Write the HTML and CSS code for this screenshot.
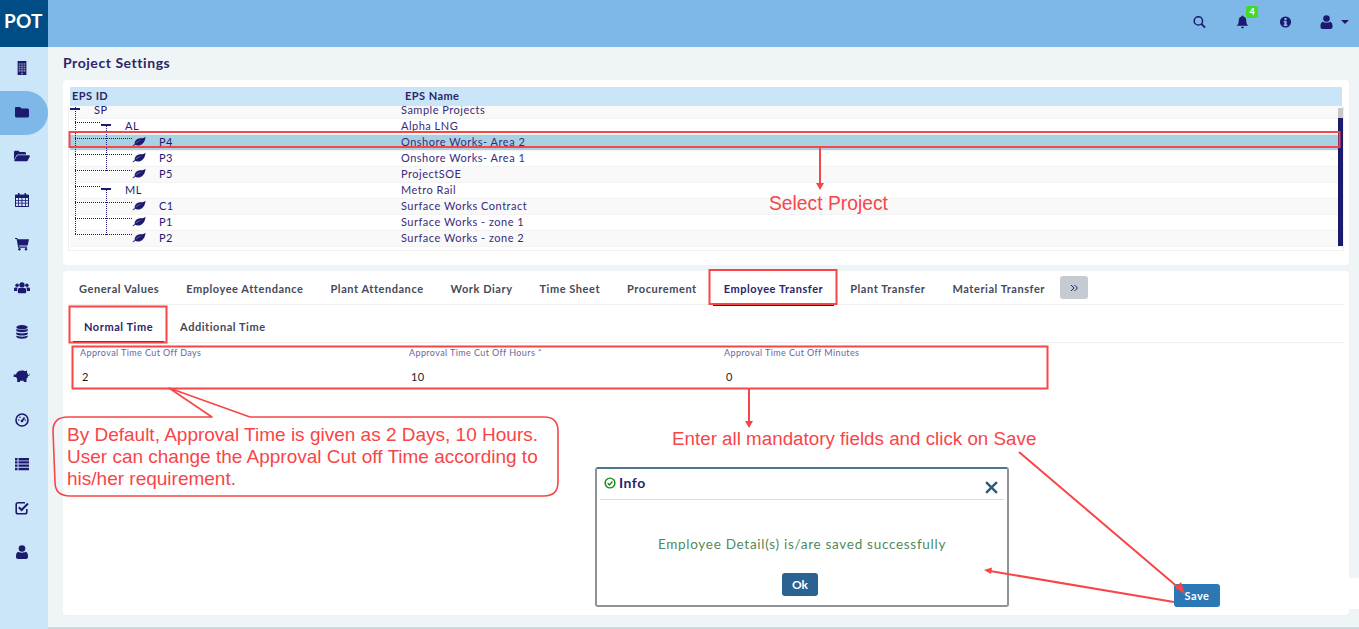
FILE: index.html
```html
<!DOCTYPE html>
<html lang="en">
<head>
<meta charset="utf-8">
<title>Project Settings</title>
<link rel="stylesheet" href="styles.css">
</head>
<body>
<svg class="defs" width="0" height="0" aria-hidden="true">
  <symbol id="leaf" viewBox="0 0 16 12"><path d="M15.5 .5C15 5 13 10 7.5 10.500C6 10.700 4.500 10.300 3.700 9.700L1.500 11.500L.5 11L3 8.800C3 4 7 2.500 10 2.300C12 2.200 14 2 15.500 .5ZM4 8.500C6 6.500 8 5.500 11 4.700C8 5 5.500 6 4 8.500Z" fill-rule="evenodd"/></symbol>
</svg>
<div class="shell">
  <aside class="sidebar">
    <div class="logo">POT</div>
    <nav class="nav">
      <a class="nav-item"><svg class="ic" viewBox="0 0 14 16"><path d="M2 0H12V16H2Z"/><path class="win" d="M3.200 2.600H5.200V4.400H3.200ZM6 2.600H8V4.400H6ZM8.800 2.600H10.800V4.400H8.800ZM3.200 5.200H5.200V7H3.200ZM6 5.200H8V7H6ZM8.800 5.200H10.800V7H8.800ZM3.200 7.800H5.200V9.600H3.200ZM6 7.800H8V9.600H6ZM8.800 7.800H10.800V9.600H8.800ZM3.200 10.400H5.200V12.200H3.200ZM6 10.400H8V12.200H6ZM8.800 10.400H10.800V12.200H8.800ZM5.800 13.400H8.200V15H5.800Z"/></svg></a>
      <a class="nav-item active"><svg class="ic" viewBox="0 0 14 14"><path d="M1.200 2H5L6.500 3.500H12.500C13.300 3.500 14 4.200 14 5V11C14 11.800 13.300 12.500 12.500 12.500H1.500C.7 12.500 0 11.800 0 11V3.200C0 2.500 .5 2 1.200 2Z"/></svg></a>
      <a class="nav-item"><svg class="ic wide" viewBox="0 0 18 14"><path d="M0 11.500V2.500C0 1.700 .6 1 1.500 1H5L6.500 2.500H12C12.800 2.500 13.500 3.200 13.500 4V5.200H4.500C3.800 5.200 3.200 5.600 2.900 6.200ZM4.500 6.200H17C17.700 6.200 18.100 6.900 17.800 7.500L15.300 12.300C15 12.800 14.500 13 14 13H1.200C.6 13 .2 12.400 .5 11.800L3.200 7C3.500 6.500 4 6.200 4.500 6.200Z"/></svg></a>
      <a class="nav-item"><svg class="ic" viewBox="0 0 14 14"><path fill-rule="evenodd" d="M3 0H4.500V1.500H9.500V0H11V1.500H13C13.600 1.500 14 1.900 14 2.500V13C14 13.600 13.600 14 13 14H1C.4 14 0 13.600 0 13V2.500C0 1.900 .4 1.500 1 1.500H3ZM1 5V7H3.200V5ZM4 5V7H6.500V5ZM7.400 5V7H10V5ZM10.800 5V7H13V5ZM1 7.800V9.800H3.200V7.800ZM4 7.800V9.800H6.500V7.800ZM7.400 7.800V9.800H10V7.800ZM10.800 7.800V9.800H13V7.800ZM1 10.600V13H3.200V10.600ZM4 10.600V13H6.500V10.600ZM7.400 10.600V13H10V10.600ZM10.800 10.600V13H13V10.600Z"/></svg></a>
      <a class="nav-item"><svg class="ic" viewBox="0 0 15 14"><path d="M0 .5H2.500L3 2H15L13.500 8.500H4.400L4.700 9.800H13V11H3.500L1.700 1.700H0Z"/><circle cx="4.800" cy="12.700" r="1.300"/><circle cx="11.800" cy="12.700" r="1.300"/></svg></a>
      <a class="nav-item"><svg class="ic wide" viewBox="0 0 18 14"><circle cx="3.500" cy="3.800" r="2"/><circle cx="14.500" cy="3.800" r="2"/><circle cx="9" cy="3.500" r="3"/><path d="M0 10V8C0 7 .8 6.500 2 6.500H4.200C3.600 7.500 3.500 8.500 3.500 10.500H1C.4 10.500 0 10.500 0 10ZM18 10V8C18 7 17.200 6.500 16 6.500H13.800C14.400 7.500 14.500 8.500 14.500 10.500H17C17.600 10.500 18 10.500 18 10ZM6 7H12C13 7 13.700 8 13.700 9.500V11.500C13.700 12.500 13 13 12 13H6C5 13 4.300 12.500 4.300 11.500V9.500C4.300 8 5 7 6 7Z"/></svg></a>
      <a class="nav-item"><svg class="ic" viewBox="0 0 12 14"><ellipse cx="6" cy="2.300" rx="5.700" ry="2.200"/><path d="M.3 3.800C1.500 5.300 10.500 5.300 11.700 3.800V5.800C11 7.700 1 7.700 .3 5.800ZM.3 7.300C1.500 8.800 10.500 8.800 11.700 7.300V9C11 11 1 11 .3 9ZM.3 10.500C1.500 12 10.500 12 11.700 10.500V11.800C11 14.300 1 14.300 .3 11.800Z"/></svg></a>
      <a class="nav-item"><svg class="ic pig" viewBox="0 0 17 14"><path d="M3 5.500C3.500 3 6 1.500 9 1.500C10.500 1.500 11.500 1.700 12.500 2.300L14 1.300V3.800C14.500 4.300 15 5 15 6C16 6 16.500 5.500 16.500 4.500L17 4.800C17 6 16.200 7 15 7C14.800 8.300 14 9.300 13.500 9.700V13H10.700V11.800H7V13H4.200V10C3.700 9.300 3.300 8.800 3.100 8H.7V5.500Z"/></svg></a>
      <a class="nav-item"><svg class="ic" viewBox="0 0 14 14"><circle class="o" cx="7" cy="7" r="6"/><path class="o" d="M7 8L9.500 4.500"/><circle cx="7" cy="8" r="1.300"/><circle cx="3.800" cy="7" r=".8"/><circle cx="5" cy="4.300" r=".8"/><circle cx="10.200" cy="7" r=".8"/></svg></a>
      <a class="nav-item"><svg class="ic" viewBox="0 0 14 13"><path d="M0 .5H2.500V3H0ZM3.500 .5H14V3H3.500ZM0 3.800H2.500V6H0ZM3.500 3.800H14V6H3.500ZM0 7H2.500V9.200H0ZM3.500 7H14V9.200H3.500ZM0 10.200H2.500V12.700H0ZM3.500 10.200H14V12.700H3.500Z"/></svg></a>
      <a class="nav-item"><svg class="ic" viewBox="0 0 14 14"><path class="o" d="M11.800 8V11C11.800 12 11.200 12.800 10 12.800H3C1.800 12.800 1.200 12 1.200 11V3.500C1.200 2.500 1.800 1.800 3 1.800H10" /><path class="o thick" d="M3.800 6.300L6.600 9L13 2.500"/></svg></a>
      <a class="nav-item"><svg class="ic" viewBox="0 0 12 14"><circle cx="6" cy="3.500" r="3.300"/><path d="M2.500 6.800C4 8 8 8 9.500 6.800C11 7 12 8.500 12 11V12C12 13.200 11.200 14 10 14H2C.8 14 0 13.200 0 12V11C0 8.500 1 7 2.500 6.800Z"/></svg></a>
    </nav>
  </aside>
  <div class="main">
    <header class="topbar">
      <svg class="ic top-ic" viewBox="0 0 14 14"><circle class="o" cx="5.800" cy="5.800" r="4.500"/><path class="o thick" d="M9 9L13 13"/></svg>
      <span class="bell"><svg class="ic top-ic" viewBox="0 0 14 14"><path d="M7 0C7.600 0 8 .4 8 1C10 1.500 11 3 11 5C11 8.500 12 10 13.500 11H.5C2 10 3 8.500 3 5C3 3 4 1.500 6 1C6 .4 6.400 0 7 0ZM5.500 12H8.500C8.500 13 7.800 13.800 7 13.800C6.200 13.800 5.500 13 5.500 12Z"/></svg><span class="badge">4</span></span>
      <svg class="ic top-ic" viewBox="0 0 14 14"><path fill-rule="evenodd" d="M7 1A6 6 0 1 1 7 13A6 6 0 1 1 7 1ZM5.800 2.800V5H8.200V2.800ZM5 6V7.300H5.800V9.800H5V11.200H9V9.800H8.200V6Z"/></svg>
      <span class="user"><svg class="ic top-ic" viewBox="0 0 12 14"><circle cx="6" cy="3.500" r="3.300"/><path d="M2.500 6.800C4 8 8 8 9.500 6.800C11 7 12 8.500 12 11V12C12 13.200 11.200 14 10 14H2C.8 14 0 13.200 0 12V11C0 8.500 1 7 2.500 6.800Z"/></svg><span class="caret"></span></span>
    </header>
    <main class="content">
      <h1 class="page-title">Project Settings</h1>
      <section class="panel tree-panel">
        <div class="tree-head"><div class="col-id">EPS ID</div><div class="col-name">EPS Name</div></div>
        <div class="tree-view">
          <div class="tree-rows">
            <div class="row"><div class="col-id id0"><span class="minus"></span><span>SP</span></div><div class="col-name">Sample Projects</div></div>
            <div class="row"><div class="col-id id1"><span class="minus"></span><span>AL</span></div><div class="col-name">Alpha LNG</div></div>
            <div class="row selected"><div class="col-id id2"><svg class="leaf"><use href="#leaf"/></svg><span>P4</span></div><div class="col-name">Onshore Works- Area 2</div></div>
            <div class="row"><div class="col-id id2"><svg class="leaf"><use href="#leaf"/></svg><span>P3</span></div><div class="col-name">Onshore Works- Area 1</div></div>
            <div class="row"><div class="col-id id2"><svg class="leaf"><use href="#leaf"/></svg><span>P5</span></div><div class="col-name">ProjectSOE</div></div>
            <div class="row"><div class="col-id id1"><span class="minus"></span><span>ML</span></div><div class="col-name">Metro Rail</div></div>
            <div class="row"><div class="col-id id2"><svg class="leaf"><use href="#leaf"/></svg><span>C1</span></div><div class="col-name">Surface Works Contract</div></div>
            <div class="row"><div class="col-id id2"><svg class="leaf"><use href="#leaf"/></svg><span>P1</span></div><div class="col-name">Surface Works - zone 1</div></div>
            <div class="row"><div class="col-id id2"><svg class="leaf"><use href="#leaf"/></svg><span>P2</span></div><div class="col-name">Surface Works - zone 2</div></div>
          </div>
          <svg class="tree-lines" width="120" height="140" viewBox="0 0 120 140">
            <path d="M5.500 4V132M5 19.500H31M5 35.500H63M5 51.500H63M5 67.500H63M5 83.500H31M5 99.500H63M5 115.500H63M5 131.500H63"/>
            <path d="M36.500 21V68M36.500 85V132"/>
          </svg>
          <div class="scrollbar"><div class="scroll-thumb"></div></div>
        </div>
      </section>
      <section class="panel settings-panel">
        <div class="tabs">
          <a class="tab">General Values</a>
          <a class="tab">Employee Attendance</a>
          <a class="tab">Plant Attendance</a>
          <a class="tab">Work Diary</a>
          <a class="tab">Time Sheet</a>
          <a class="tab">Procurement</a>
          <a class="tab on">Employee Transfer</a>
          <a class="tab">Plant Transfer</a>
          <a class="tab">Material Transfer</a>
          <button class="more" aria-label="More tabs"><svg class="dbl" viewBox="0 0 8 8"><path d="M1 1L4 4L1 7M4.500 1L7.500 4L4.500 7"/></svg></button>
        </div>
        <div class="subtabs">
          <a class="subtab on">Normal Time</a>
          <a class="subtab">Additional Time</a>
        </div>
        <div class="fields">
          <div class="field f1"><label>Approval Time Cut Off Days</label><div class="value">2</div></div>
          <div class="field f2"><label>Approval Time Cut Off Hours <sup>*</sup></label><div class="value">10</div></div>
          <div class="field f3"><label>Approval Time Cut Off Minutes</label><div class="value">0</div></div>
        </div>
        <div class="save-bar"><button class="save">Save</button></div>
      </section>
    </main>
  </div>
</div>

<div class="modal">
  <div class="modal-head">
    <svg class="check" viewBox="0 0 14 14"><circle cx="7" cy="7" r="5.700"/><path d="M4.300 7.200L6.300 9.200L9.900 5.300"/></svg>
    <span class="modal-title">Info</span>
    <svg class="close" viewBox="0 0 12 12"><path d="M1 1L11 11M11 1L1 11"/></svg>
  </div>
  <p class="modal-msg">Employee Detail(s) is/are saved successfully</p>
  <div class="modal-foot"><button class="ok">Ok</button></div>
</div>

<svg class="marks" width="1359" height="629" viewBox="0 0 1359 629" aria-hidden="true">
  <rect x="69.500" y="132" width="1270" height="15"/>
  <rect x="709.500" y="270" width="127" height="34"/>
  <rect x="69.500" y="306.500" width="97" height="36"/>
  <rect x="72.500" y="346.500" width="975" height="42"/>
  <path d="M820 148V186M749 389V424M1019 452L1180 589M1174 602L990 571"/>
  <path class="tip" d="M820 190L816 183H824ZM749 428L745 421H753ZM1185 594L1175 588L1181 582ZM984 570L992 567.500L991 574Z"/>
  <path class="callout" d="M212 417L169 388L250 417H544Q558 417 558 431V482Q558 496 544 496H70Q55 496 55 482L53 431Q53 417 68 417Z"/>
</svg>
<div class="note n-select">Select Project</div>
<div class="note n-default">By Default, Approval Time is given as 2 Days, 10 Hours.<br>User can change the Approval Cut off Time according to<br>his/her requirement.</div>
<div class="note n-enter">Enter all mandatory fields and click on Save</div>
</body>
</html>
```

FILE: styles.css
```css
* { box-sizing: border-box; }
html, body { margin: 0; height: 100%; overflow: hidden; }
body { font-family: Lato, "Liberation Sans", sans-serif; color: #1c1a6e; background: #eff4f7; position: relative; }
.defs { position: absolute; }

.shell { display: flex; height: 629px; }
.sidebar { width: 48px; flex: none; background: #cbe5f9; }
.logo { height: 47px; background: #004c85; color: #fff; font-weight: 700; font-size: 19px; line-height: 41px; padding-left: 4px; letter-spacing: .2px; }
.nav { display: flex; flex-direction: column; }
.nav-item { height: 44px; display: flex; align-items: center; justify-content: center; padding: 0 5px 2px 0; }
.nav-item.active { background: #7db8e8; border-radius: 0 22px 22px 0; }

.ic { width: 14px; height: 14px; fill: #1c1a6e; flex: none; }
.ic.wide { width: 16px; }
.ic.pig { width: 17px; }
.ic .o { fill: none; stroke: #1c1a6e; stroke-width: 1.600; }
.ic .o.thick { stroke-width: 2; }
.ic .win { fill: #7f80ad; }

.main { flex: 1; min-width: 0; display: flex; flex-direction: column; }
.topbar { height: 47px; flex: none; background: #7db8e8; display: flex; align-items: center; justify-content: flex-end; gap: 30px; padding: 0 10px 4px 0; }
.top-ic { width: 13px; height: 14px; }
.bell { position: relative; display: flex; }
.badge { position: absolute; left: 10px; top: -9px; width: 12px; height: 12px; border-radius: 2px; background: #3fdc23; color: #fff; font-size: 9px; font-weight: 700; line-height: 12px; text-align: center; }
.user { display: flex; align-items: center; gap: 8px; margin-left: -2px; }
.caret { width: 0; height: 0; border-left: 4px solid transparent; border-right: 4px solid transparent; border-top: 4px solid #1c1a6e; }

.content { flex: 1; padding: 7px 10px 0 15px; display: flex; flex-direction: column; border-bottom: 2px solid #d0d8df; }
.page-title { margin: 0 0 9px; font-size: 14px; line-height: 17px; font-weight: 700; letter-spacing: .55px; color: #2b2568; }
.panel { background: #fff; border-radius: 4px; }
.tree-panel { height: 185px; padding: 7px 5px 0 5px; margin-bottom: 6px; }
.tree-head { display: flex; height: 19px; margin: 0 2px 0 2px; background: #cbe5f8; font-size: 11px; line-height: 18px; font-weight: 700; color: #2b2568; letter-spacing: .45px; }
.tree-head .col-id { width: 335px; padding-left: 2px; }
.tree-view { position: relative; height: 145px; border: 1px solid #f0f0f0; border-top: 0; overflow: hidden; }
.tree-rows { margin-top: -3px; padding-left: 1px; }
.row { display: flex; height: 16px; padding-bottom: 2px; font-size: 11px; line-height: 13px; letter-spacing: .5px; color: #1e1a70; border-bottom: 1px solid #f3f3f3; }
.row:nth-child(odd) { background: #f9f9f9; }
.row.selected { background: #a6d2e4; }
.row .col-id { width: 331px; display: flex; align-items: center; }
.row .col-name { flex: 1; color: #3a2a7a; }
.id0 { padding-left: 0; }
.id0 span:last-child { margin-left: 14px; }
.id1 { padding-left: 31px; }
.id1 span:last-child { margin-left: 14px; }
.id2 { padding-left: 62px; }
.id2 span:last-child { margin-left: 13px; }
.minus { width: 10px; height: 2px; background: #1c1a6e; flex: none; position: relative; top: -1px; }
.leaf { width: 14px; height: 11px; fill: #1c1a6e; flex: none; }
.tree-lines { position: absolute; left: 1px; top: -3px; fill: none; stroke: #1c1a6e; stroke-width: 1; stroke-dasharray: 1 1; shape-rendering: crispEdges; pointer-events: none; }
.scrollbar { position: absolute; right: 0; top: 2px; bottom: 4px; width: 5px; background: #c8c8c8; }
.scroll-thumb { position: absolute; top: 10px; bottom: 0; left: 0; right: 0; background: #1c1a6e; }

.settings-panel { height: 344px; padding: 0 5px; display: flex; flex-direction: column; position: relative; }
.tabs { height: 34px; display: flex; align-items: center; padding: 2px 0 0 11px; gap: 27px; border-bottom: 1px solid #efefef; flex: none; }
.tab { font-size: 11px; font-weight: 700; letter-spacing: .55px; color: #454a5a; line-height: 32px; position: relative; white-space: nowrap; }
.tab.on { color: #2b2568; }
.tab.on::after { content: ""; position: absolute; left: -11px; right: -11px; bottom: -1px; height: 1px; background: #1c1a6e; }
.more { width: 28px; height: 23px; border: 0; background: #c6cbd3; border-radius: 3px; display: flex; align-items: center; justify-content: center; padding: 0; margin: -2px 0 0 -12px; }
.dbl { width: 8px; height: 8px; fill: none; stroke: #1c1a6e; stroke-width: 1; }
.subtabs { height: 38px; display: flex; align-items: stretch; padding-left: 5px; border-bottom: 1px solid #efefef; flex: none; }
.subtab { font-size: 11px; font-weight: 700; letter-spacing: .55px; color: #454a5a; padding: 15px 11px 0; line-height: 14px; position: relative; }
.subtab.on { color: #2b2568; margin-right: 5px; }
.subtab.on::after { content: ""; position: absolute; left: 0; right: 0; bottom: 0; height: 1px; background: #1c1a6e; }
.fields { display: flex; padding-top: 4px; height: 45px; flex: none; }
.field label { display: block; font-size: 9px; line-height: 11px; letter-spacing: .4px; color: #6a669c; }
.field sup { font-size: 8px; line-height: 0; vertical-align: 1px; }
.value { font-size: 11px; line-height: 14px; margin: 12px 0 0 2px; color: #222; letter-spacing: .3px; }
.f1 { width: 341px; padding-left: 12px; }
.f2 { width: 315px; }
.save-bar { position: absolute; left: 1111px; right: -10px; top: 307px; height: 31px; background: #fff; }
.save { position: absolute; top: 6px; left: 0; width: 46px; height: 23px; border: 0; border-radius: 3px; background: #2b78b4; color: #fff; font: 700 11px/23px Lato, sans-serif; letter-spacing: .5px; padding: 0; }

.modal { position: absolute; left: 595px; top: 467px; width: 414px; height: 140px; background: #fff; border: 2px solid #8f9396; border-top-color: #4f7590; border-radius: 3px; padding: 0 3px; }
.modal-head { height: 31px; border-bottom: 1px solid #dcdcdc; display: flex; align-items: flex-start; padding: 6px 0 0 4px; }
.check { width: 12px; height: 12px; margin-top: 2px; fill: none; stroke: #178a1a; stroke-width: 1.700; flex: none; }
.modal-title { font-size: 14px; line-height: 15px; font-weight: 700; letter-spacing: .5px; margin-left: 3px; color: #2b2568; }
.close { width: 13px; height: 13px; margin: 6px 6px 0 auto; fill: none; stroke: #2d5a7a; stroke-width: 2.200; }
.modal-msg { margin: 35px 0 0; text-align: center; font-size: 13.5px; line-height: 18px; letter-spacing: .71px; color: #4f8a5a; }
.modal-foot { text-align: center; margin-top: 20px; }
.ok { width: 36px; height: 23px; border: 0; border-radius: 3px; background: #2a6392; color: #fff; font: 700 12px/23px Lato, sans-serif; padding: 0; margin-right: 4px; }

.marks { position: absolute; left: 0; top: 0; fill: none; stroke: #f84548; stroke-width: 2; pointer-events: none; }
.marks .tip { fill: #f84548; stroke: none; }
.marks .callout { stroke-width: 1.600; stroke-linejoin: round; }
.note { position: absolute; font-family: "Liberation Sans", Arial, sans-serif; color: #f84548; font-size: 19px; line-height: 22px; white-space: nowrap; }
.n-select { left: 769px; top: 193px; font-size: 19.3px; }
.n-default { left: 67px; top: 424px; }
.n-enter { left: 672px; top: 428px; font-size: 18.8px; }
```
